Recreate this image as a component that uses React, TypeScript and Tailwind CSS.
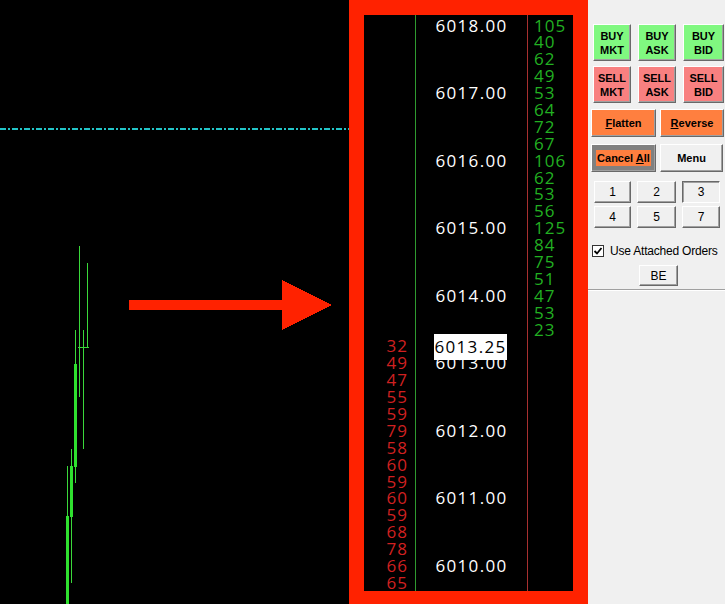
import type { ReactNode } from 'react';
import clsx from 'clsx';

const ASKS = [105, 40, 62, 49, 53, 64, 72, 67, 106, 62, 53, 56, 125, 84, 75, 51, 47, 53, 23];
const BIDS = [32, 49, 47, 55, 59, 79, 58, 60, 59, 60, 59, 68, 78, 66, 65];
const ROWS = 34;
const LAST_ROW = 19; // 6013.25

const rows = Array.from({ length: ROWS }, (_, i) => {
  const price = 6018 - i * 0.25;
  return {
    price,
    label: Number.isInteger(price) ? price.toFixed(2) : '',
    ask: i < ASKS.length ? ASKS[i] : null,
    bid: i >= LAST_ROW ? BIDS[i - LAST_ROW] : null,
  };
});

// [x, y1, y2] wicks, [x, y, h] bodies
const WICKS = [
  [79, 246, 397],
  [87, 263, 347],
  [75, 330, 483],
  [83, 330, 449],
  [71, 449, 583],
  [67, 466, 604],
];
const BODIES = [
  [74, 364, 103],
  [70, 466, 51],
  [66, 516, 88],
];

function Chart() {
  return (
    <svg width="349" height="604" className="block" shapeRendering="crispEdges">
      <rect width="349" height="604" fill="#000" />
      {/* last price line */}
      <line x1="0" y1="129" x2="349" y2="129" stroke="#22c4c8" strokeWidth="2" strokeDasharray="6 2 2 2" />
      {/* candles */}
      <g fill="#3ad83a">
        {WICKS.map(([x, y1, y2], i) => (
          <rect key={i} x={x} y={y1} width="1" height={y2 - y1} />
        ))}
        <rect x="78" y="347" width="11" height="1" />
      </g>
      <g fill="#2fe02f">
        {BODIES.map(([x, y, h], i) => (
          <rect key={i} x={x} y={y} width="3" height={h} />
        ))}
      </g>
      {/* arrow */}
      <g fill="#ff2200">
        <rect x="129" y="300" width="155" height="10" />
        <polygon points="282,280 332,305 282,330" />
      </g>
    </svg>
  );
}

function Ladder() {
  return (
    <div className="w-[239px] h-[604px] bg-[#ff2200] pt-[15px] pb-[13px] px-[15px] flex-shrink-0">
      <div className="h-full bg-black flex text-[17px] leading-[16.9px] font-['Open_Sans',sans-serif]">
        {/* bids */}
        <div className="w-[52px] border-r border-[#2f9a2f] pt-[2.5px] pr-[7px] text-right text-[#d02020] tracking-[1px]">
          {rows.map((r, i) => (
            <div key={i} className="h-[16.9px]">{r.bid ?? ''}</div>
          ))}
        </div>
        {/* prices */}
        <div className="w-[112px] border-r border-[#a83030] pt-[2.5px] text-center text-white tracking-[1.3px]">
          {rows.map((r, i) => (
            <div key={i} className="h-[16.9px] relative">
              {r.label}
              {i === LAST_ROW && (
                <div className="absolute z-10 left-[18px] top-[-4px] w-[73px] h-[26px] bg-white text-black flex items-center justify-center">
                  6013.25
                </div>
              )}
            </div>
          ))}
        </div>
        {/* asks */}
        <div className="flex-1 pt-[2.5px] pl-[6px] text-[#22b022] tracking-[1px]">
          {rows.map((r, i) => (
            <div key={i} className="h-[16.9px]">{r.ask ?? ''}</div>
          ))}
        </div>
      </div>
    </div>
  );
}

function Btn({
  className,
  pressed,
  children,
}: {
  className?: string;
  pressed?: boolean;
  children: ReactNode;
}) {
  return (
    <button
      className={clsx(
        'flex flex-col items-center justify-center border leading-[14px] text-black',
        pressed
          ? 'border-t-[#696969] border-l-[#696969] border-r-white border-b-white shadow-[inset_1px_1px_0_#a0a0a0]'
          : 'border-t-white border-l-white border-r-[#696969] border-b-[#696969] shadow-[inset_-1px_-1px_0_#a0a0a0]',
        className
      )}
    >
      {children}
    </button>
  );
}

function Panel() {
  return (
    <div className="flex-1 h-[604px] bg-[#f0f0f0] flex flex-col pt-[24px] font-['Liberation_Sans',Arial,sans-serif]">
      <div className="flex gap-[7px] pl-[5px] text-[11px] font-bold">
        <Btn className="w-[38px] h-[37px] bg-[#80f880]"><span>BUY</span><span>MKT</span></Btn>
        <Btn className="w-[38px] h-[37px] bg-[#80f880]"><span>BUY</span><span>ASK</span></Btn>
        <Btn className="w-[41px] h-[37px] bg-[#80f880]"><span>BUY</span><span>BID</span></Btn>
      </div>
      <div className="flex gap-[7px] pl-[5px] mt-[5px] text-[11px] font-bold">
        <Btn className="w-[38px] h-[37px] bg-[#f88080]"><span>SELL</span><span>MKT</span></Btn>
        <Btn className="w-[38px] h-[37px] bg-[#f88080]"><span>SELL</span><span>ASK</span></Btn>
        <Btn className="w-[41px] h-[37px] bg-[#f88080]"><span>SELL</span><span>BID</span></Btn>
      </div>
      <div className="flex gap-[4px] pl-[3px] mt-[6px] text-[11px] font-bold">
        <Btn className="w-[65px] h-[28px] bg-[#ff7f3f]"><span><u>F</u>latten</span></Btn>
        <Btn className="w-[64px] h-[28px] bg-[#ff7f3f]"><span><u>R</u>everse</span></Btn>
      </div>
      <div className="flex gap-[4px] pl-[3px] mt-[7px] text-[11px] font-bold">
        <Btn className="w-[65px] h-[28px] bg-[#808080]">
          <span className="bg-[#ff7f3f] px-[1px] leading-[16px]">Cancel <u>A</u>ll</span>
        </Btn>
        <Btn className="w-[63px] h-[28px] bg-[#f0f0f0]"><span>Menu</span></Btn>
      </div>
      <div className="flex gap-[6px] pl-[6px] mt-[9px] text-[12px]">
        <Btn className="w-[37px] h-[22px] bg-[#f0f0f0]">1</Btn>
        <Btn className="w-[39px] h-[22px] bg-[#f0f0f0]">2</Btn>
        <Btn className="w-[38px] h-[22px] bg-[#f0f0f0]" pressed>3</Btn>
      </div>
      <div className="flex gap-[6px] pl-[6px] mt-[3px] text-[12px]">
        <Btn className="w-[37px] h-[22px] bg-[#f0f0f0]">4</Btn>
        <Btn className="w-[39px] h-[22px] bg-[#f0f0f0]">5</Btn>
        <Btn className="w-[38px] h-[22px] bg-[#f0f0f0]">7</Btn>
      </div>
      <div className="flex items-center gap-[6px] pl-[4px] mt-[16px] h-[13px] text-[12px] text-black">
        <div className="w-[12px] h-[12px] border border-[#333] bg-white flex items-center justify-center">
          <svg width="10" height="10" viewBox="0 0 10 10">
            <path d="M1.5 5 L4 7.5 L8.5 2" stroke="#000" strokeWidth="1.8" fill="none" />
          </svg>
        </div>
        <span className="tracking-[-0.2px]">Use Attached Orders</span>
      </div>
      <Btn className="w-[39px] h-[21px] ml-[51px] mt-[8px] bg-[#f0f0f0] text-[12px]">BE</Btn>
      <div className="mt-[3px] border-t border-[#a0a0a0] border-b border-b-white" />
    </div>
  );
}

export default function App() {
  return (
    <div className="w-[725px] h-[604px] flex overflow-hidden bg-black">
      <div className="w-[349px] flex-shrink-0">
        <Chart />
      </div>
      <Ladder />
      <Panel />
    </div>
  );
}
